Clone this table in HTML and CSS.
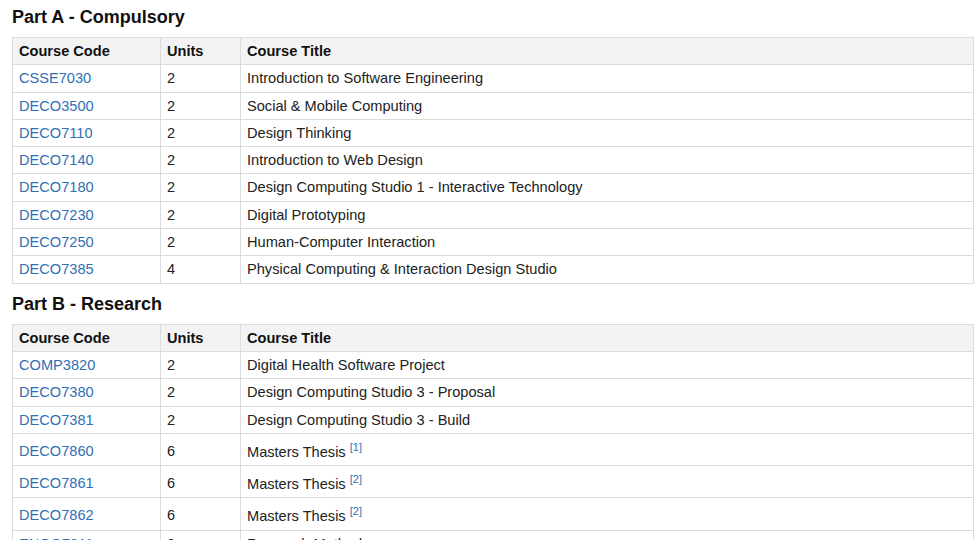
FILE: index.html
```html
<!DOCTYPE html>
<html lang="en">
<head>
    <meta charset="UTF-8">
    <meta name="viewport" content="width=device-width, initial-scale=1.0">
    <title>Program Rules</title>
    <link rel="stylesheet" href="styles.css">
</head>
<body>
    <h3 class="part-title">Part A - Compulsory</h3>
    <table class="courses">
        <thead>
            <tr><th class="col-code">Course Code</th><th class="col-units">Units</th><th>Course Title</th></tr>
        </thead>
        <tbody>
            <tr><td><a href="#">CSSE7030</a></td><td>2</td><td>Introduction to Software Engineering</td></tr>
            <tr><td><a href="#">DECO3500</a></td><td>2</td><td>Social &amp; Mobile Computing</td></tr>
            <tr><td><a href="#">DECO7110</a></td><td>2</td><td>Design Thinking</td></tr>
            <tr><td><a href="#">DECO7140</a></td><td>2</td><td>Introduction to Web Design</td></tr>
            <tr><td><a href="#">DECO7180</a></td><td>2</td><td>Design Computing Studio 1 - Interactive Technology</td></tr>
            <tr><td><a href="#">DECO7230</a></td><td>2</td><td>Digital Prototyping</td></tr>
            <tr><td><a href="#">DECO7250</a></td><td>2</td><td>Human-Computer Interaction</td></tr>
            <tr><td><a href="#">DECO7385</a></td><td>4</td><td>Physical Computing &amp; Interaction Design Studio</td></tr>
        </tbody>
    </table>

    <h3 class="part-title">Part B - Research</h3>
    <table class="courses">
        <thead>
            <tr><th class="col-code">Course Code</th><th class="col-units">Units</th><th>Course Title</th></tr>
        </thead>
        <tbody>
            <tr><td><a href="#">COMP3820</a></td><td>2</td><td>Digital Health Software Project</td></tr>
            <tr><td><a href="#">DECO7380</a></td><td>2</td><td>Design Computing Studio 3 - Proposal</td></tr>
            <tr><td><a href="#">DECO7381</a></td><td>2</td><td>Design Computing Studio 3 - Build</td></tr>
            <tr class="noted"><td><a href="#">DECO7860</a></td><td>6</td><td>Masters Thesis <sup class="note">[1]</sup></td></tr>
            <tr class="noted"><td><a href="#">DECO7861</a></td><td>6</td><td>Masters Thesis <sup class="note">[2]</sup></td></tr>
            <tr class="noted"><td><a href="#">DECO7862</a></td><td>6</td><td>Masters Thesis <sup class="note">[2]</sup></td></tr>
            <tr><td><a href="#">ENGG7811</a></td><td>2</td><td>Research Methods</td></tr>
        </tbody>
    </table>
</body>
</html>
```

FILE: styles.css
```css
body {
    font-family: "Liberation Sans", Arial, Helvetica, sans-serif;
    color: #222;
    margin: 0;
    padding: 6px 2px 0 12px;
    background: #fff;
    overflow: hidden;
}

.part-title {
    font-size: 18px;
    line-height: 22px;
    font-weight: bold;
    color: #111;
    margin: 0 0 9px 0;
}

.courses + .part-title {
    margin-top: 9px;
}

.courses {
    width: 962px;
    border-collapse: collapse;
    font-size: 14.6px;
    line-height: 16.3px;
}

.courses th,
.courses td {
    border: 1px solid #dcdcdc;
    padding: 5px 6px;
    text-align: left;
    vertical-align: middle;
}

.courses th {
    background-color: #f3f3f3;
    font-weight: bold;
    color: #111;
}

.col-code { width: 135px; }
.col-units { width: 67px; }

.courses a {
    color: #2f70b4;
    text-decoration: none;
}

.noted td {
    padding-top: 8px;
    padding-bottom: 5px;
}

.note {
    font-size: 11px;
    line-height: 10px;
    color: #2f70b4;
    vertical-align: 6px;
}
```
